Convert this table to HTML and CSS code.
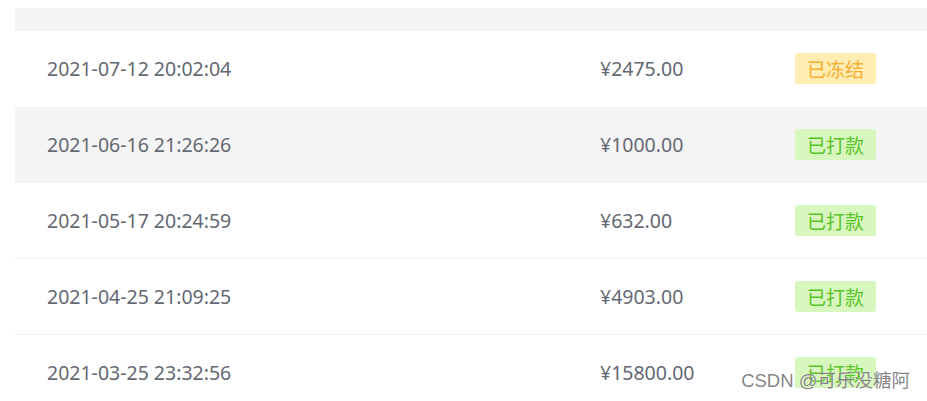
FILE: index.html
```html
<!DOCTYPE html>
<html lang="zh">
<head>
<meta charset="utf-8">
<link rel="stylesheet" href="styles.css">
</head>
<body>
<div class="table">
  <div class="head"></div>
  <div class="row first">
    <div class="c-date">2021-07-12 20:02:04</div>
    <div class="c-amt">¥2475.00</div>
    <div class="c-tag"><span class="tag warn">已冻结</span></div>
  </div>
  <div class="row alt">
    <div class="c-date">2021-06-16 21:26:26</div>
    <div class="c-amt">¥1000.00</div>
    <div class="c-tag"><span class="tag ok">已打款</span></div>
  </div>
  <div class="row">
    <div class="c-date">2021-05-17 20:24:59</div>
    <div class="c-amt">¥632.00</div>
    <div class="c-tag"><span class="tag ok">已打款</span></div>
  </div>
  <div class="row">
    <div class="c-date">2021-04-25 21:09:25</div>
    <div class="c-amt">¥4903.00</div>
    <div class="c-tag"><span class="tag ok">已打款</span></div>
  </div>
  <div class="row">
    <div class="c-date">2021-03-25 23:32:56</div>
    <div class="c-amt">¥15800.00</div>
    <div class="c-tag"><span class="tag ok">已打款</span></div>
  </div>
</div>
<div class="watermark">CSDN @可乐没糖阿</div>
</body>
</html>
```
FILE: styles.css
```css
html, body {
  margin: 0;
  height: 401px;
  overflow: hidden;
  background: #fff;
}
body {
  padding: 8px 0 0 15px;
  box-sizing: border-box;
  font-family: "Noto Sans", "Noto Sans CJK SC", sans-serif;
  color: #646873;
  font-size: 19.5px;
  position: relative;
}
.table {
  display: flex;
  flex-direction: column;
}
.head {
  height: 23px;
  background: #f4f4f4;
}
.row {
  height: 76px;
  box-sizing: border-box;
  border-bottom: 1px solid #f0f0f0;
  display: grid;
  grid-template-columns: 553px 195px 1fr;
  align-items: center;
  padding-left: 32px;
}
.row.first,
.row.alt {
  border-bottom-color: transparent;
}
.row.alt {
  background: #f4f4f4;
}
.tag {
  display: inline-flex;
  align-items: center;
  justify-content: center;
  width: 81px;
  height: 31px;
  border-radius: 3px;
  font-family: "Noto Sans CJK SC", sans-serif;
  font-size: 19px;
}
.tag.warn {
  background: #ffedb1;
  color: #f6ad34;
}
.tag.ok {
  background: #d8f7be;
  color: #5ac32a;
}
.watermark {
  position: absolute;
  right: 17px;
  bottom: 9px;
  font-family: "Liberation Sans", "Noto Sans CJK SC", sans-serif;
  font-size: 18.5px;
  color: rgba(110, 110, 110, 0.85);
  text-shadow: 0 0 1px #fff;
}
```
